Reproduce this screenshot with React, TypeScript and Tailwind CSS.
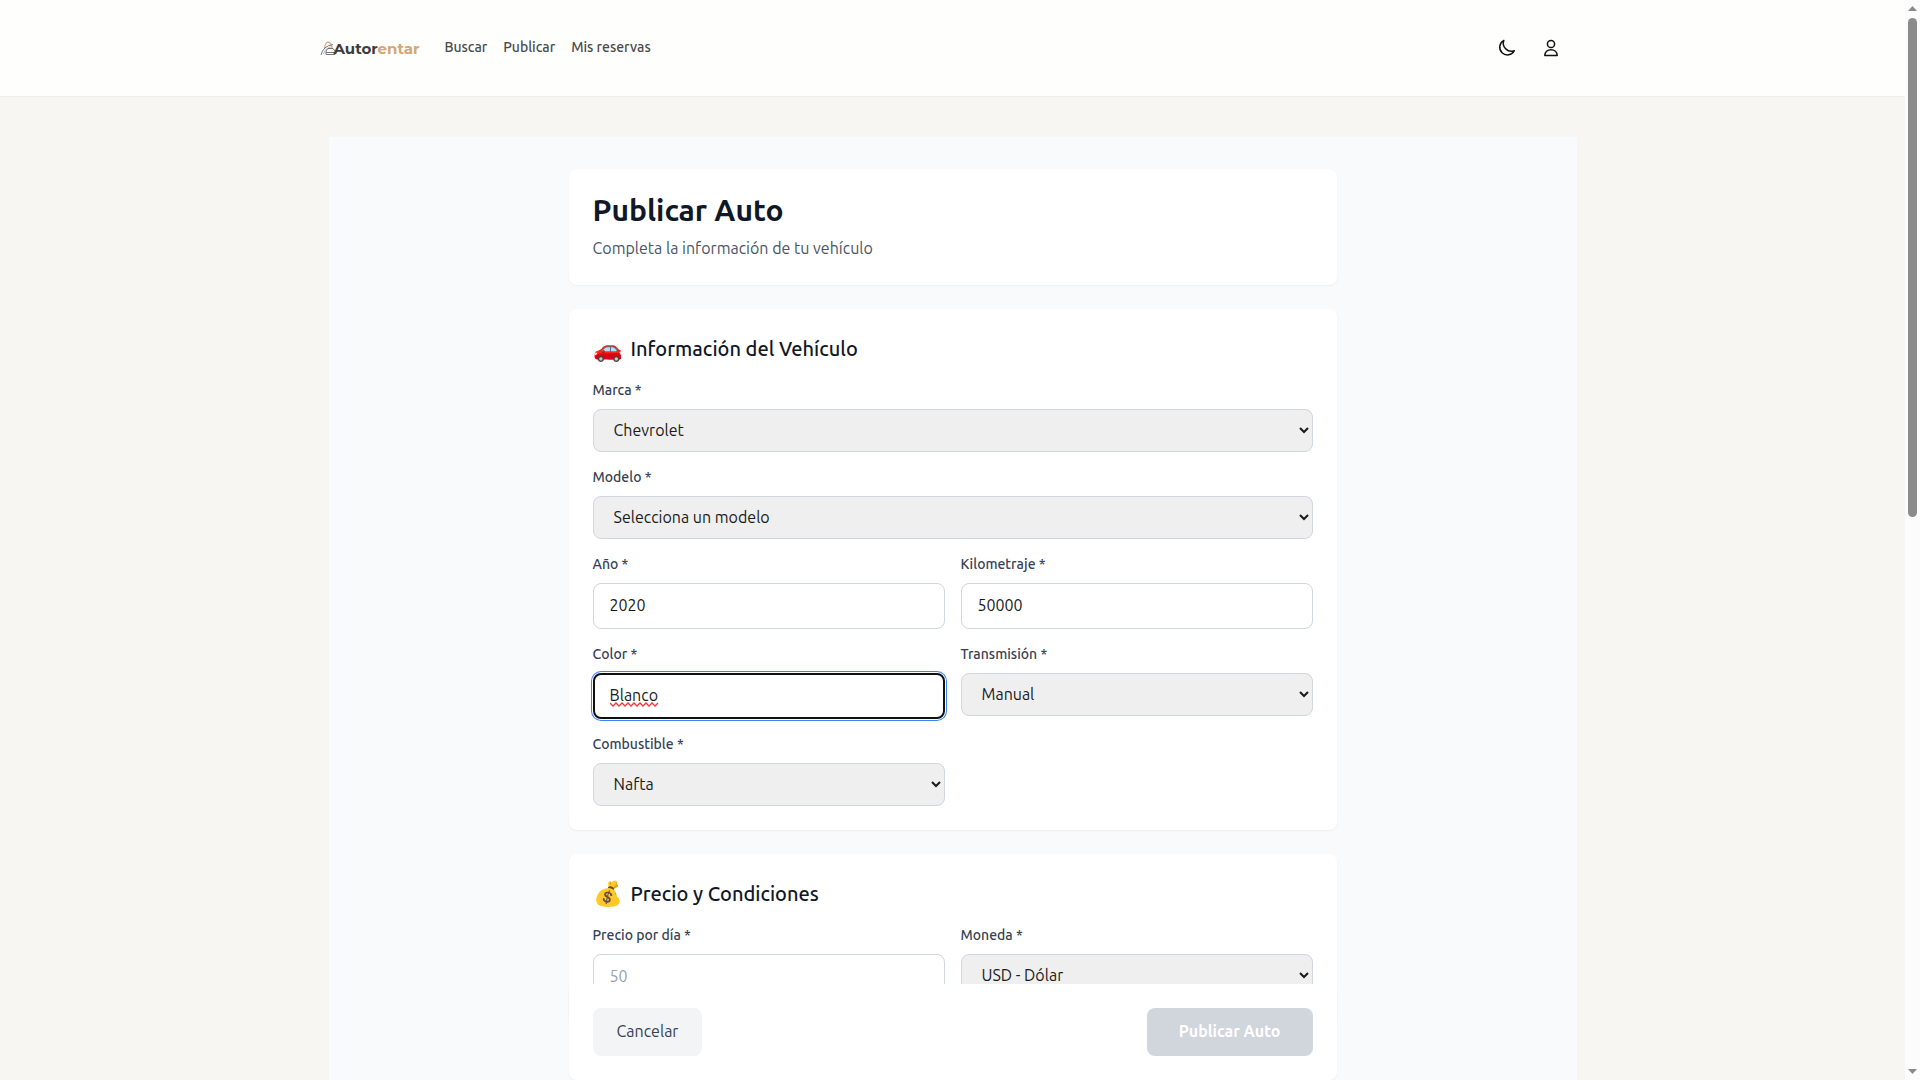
import React from "react";

const labelClass = "mb-2.5 block text-sm leading-[18px] font-medium text-gray-700";
const inputClass =
  "block h-[46px] w-full rounded-lg border border-gray-300 bg-white px-4 pb-0.5 text-[#1a1a1a] placeholder:text-gray-400 outline-none";
const focusedInputClass =
  "block h-[46px] w-full rounded-lg border-2 border-[#101010] bg-white px-[15px] pb-0.5 text-[#1a1a1a] shadow-[0_0_0_1px_#ffffff,0_0_0_2px_#3b82f6] outline-none";
const selectClass =
  "block h-[43px] w-full rounded-lg border border-gray-300 bg-[#efefef] px-4 pb-0.5 text-[#1a1a1a]";

function SelectField({ id, label, value }: { id: string; label: string; value: string }) {
  return (
    <div>
      <label htmlFor={id} className={labelClass}>
        {label}
      </label>
      <select id={id} defaultValue={value} className={selectClass}>
        <option>{value}</option>
      </select>
    </div>
  );
}

function InputField({
  id,
  label,
  value,
  placeholder,
  active = false,
}: {
  id: string;
  label: string;
  value?: string;
  placeholder?: string;
  active?: boolean;
}) {
  return (
    <div>
      <label htmlFor={id} className={labelClass}>
        {label}
      </label>
      <div className="relative">
        <input
          id={id}
          type="text"
          spellCheck={false}
          defaultValue={value}
          placeholder={placeholder}
          className={active ? focusedInputClass : inputClass}
        />
        {active && (
          <svg
            aria-hidden="true"
            width="49"
            height="5"
            viewBox="0 0 49 5"
            fill="none"
            stroke="#f5333a"
            strokeWidth="1.3"
            className="pointer-events-none absolute top-[29px] left-[17px]"
          >
            <path d="M0 1L3 4L6 1L9 4L12 1L15 4L18 1L21 4L24 1L27 4L30 1L33 4L36 1L39 4L42 1L45 4L48 1" />
          </svg>
        )}
      </div>
    </div>
  );
}

function SectionTitle({ icon, children }: { icon: string; children: React.ReactNode }) {
  return (
    <h2 className="mb-4 flex items-center text-xl font-medium text-gray-900">
      <span className="mr-2 text-2xl font-normal">{icon}</span>
      {children}
    </h2>
  );
}

function Logo() {
  return (
    <a href="#inicio" className="flex items-center pt-0.5" aria-label="Autorentar">
      <svg width="18" height="18" viewBox="0 0 18 18" fill="none" className="-mr-1">
        <path d="M4.5 9 Q5 2.5 8 2 Q11 2 12.5 9" stroke="#d9b48a" strokeWidth="1.3" />
        <path d="M1 15 Q3 6 13 4.5" stroke="#777" strokeWidth="1" />
        <path d="M3.5 14 Q5 8 12 6.5" stroke="#aaa" strokeWidth="0.8" />
        <path d="M6 11 L8 8.5 H13 L15 11 M6 11 V14.5 H15 L17 12 M6 12.5 H15" stroke="#666" strokeWidth="0.9" />
      </svg>
      <span className="font-['Montserrat','Inter',sans-serif] text-[15px] leading-6 font-bold text-[#3c3c3c]">
        Autor<span className="text-[#d2a774]">entar</span>
      </span>
    </a>
  );
}

function Header() {
  return (
    <header className="h-[97px] shrink-0 border-b border-[#efeeea] bg-[#fefefd]">
      <div className="mx-auto flex h-24 max-w-[1280px] items-center justify-between px-[7px]">
        <div className="flex items-center gap-[25px]">
          <Logo />
          <nav className="flex gap-4 pb-0.5 text-sm font-medium text-[#4a4a4a]">
            <a href="#buscar">Buscar</a>
            <a href="#publicar">Publicar</a>
            <a href="#reservas">Mis reservas</a>
          </nav>
        </div>
        <div className="flex items-center gap-1 pr-[15px] text-[#111]">
          <button type="button" aria-label="Modo oscuro" className="flex h-10 w-10 items-center justify-center">
            <svg width="20" height="20" viewBox="0 0 20 20" fill="none" stroke="currentColor" strokeWidth="1.5" strokeLinejoin="round">
              <path d="M6.8 2.4A7.7 7.7 0 1 0 17.3 12.7A8.1 8.1 0 0 1 6.8 2.4Z" />
            </svg>
          </button>
          <button type="button" aria-label="Perfil" className="flex h-10 w-10 items-center justify-center">
            <svg width="20" height="20" viewBox="0 0 20 20" fill="none" stroke="currentColor" strokeWidth="1.5" strokeLinejoin="round">
              <circle cx="10" cy="6" r="3.6" />
              <path d="M3.8 17.6C3.8 13.9 6.5 11.7 10 11.7S16.2 13.9 16.2 17.6Z" />
            </svg>
          </button>
        </div>
      </div>
    </header>
  );
}

function Scrollbar() {
  return (
    <div aria-hidden="true" className="flex w-[15px] shrink-0 flex-col items-center bg-[#fcfcfc] py-1.5">
      <svg width="9" height="5" viewBox="0 0 9 5" fill="#8b8b8b">
        <path d="M4.5 0 L9 5 H0 Z" />
      </svg>
      <div className="my-[7px] flex w-[9px] flex-1 flex-col">
        <div className="h-[47.8%] rounded-full bg-[#8b8b8b]" />
      </div>
      <svg width="9" height="5" viewBox="0 0 9 5" fill="#8b8b8b">
        <path d="M4.5 5 L9 0 H0 Z" />
      </svg>
    </div>
  );
}

export default function App() {
  return (
    <div className="flex h-screen bg-[#f7f6f3] font-['Ubuntu','Noto_Sans',sans-serif] text-base">
      <div className="min-w-0 flex-1 overflow-y-auto [scrollbar-width:none]">
        <Header />
        <main className="mx-auto max-w-[1280px] px-4 pt-10">
          <div className="bg-gray-50 px-4 py-8">
            <form className="mx-auto flex max-w-3xl flex-col gap-6">
              <div className="rounded-lg bg-white px-6 pt-[23px] pb-[25px] shadow-xs">
                <h1 className="mb-2 text-3xl font-bold text-gray-900">Publicar Auto</h1>
                <p className="text-gray-600">Completa la información de tu vehículo</p>
              </div>

              <section className="rounded-lg bg-white p-6 shadow-xs">
                <SectionTitle icon="🚗">Información del Vehículo</SectionTitle>
                <div className="flex flex-col gap-4">
                  <SelectField id="marca" label="Marca *" value="Chevrolet" />
                  <SelectField id="modelo" label="Modelo *" value="Selecciona un modelo" />
                  <div className="grid grid-cols-2 gap-4">
                    <InputField id="anio" label="Año *" value="2020" />
                    <InputField id="kilometraje" label="Kilometraje *" value="50000" />
                    <InputField id="color" label="Color *" value="Blanco" active />
                    <SelectField id="transmision" label="Transmisión *" value="Manual" />
                    <SelectField id="combustible" label="Combustible *" value="Nafta" />
                  </div>
                </div>
              </section>

              <section className="rounded-lg bg-white p-6 shadow-xs">
                <SectionTitle icon="💰">Precio y Condiciones</SectionTitle>
                <div className="grid grid-cols-2 gap-4">
                  <InputField id="precio" label="Precio por día *" placeholder="50" />
                  <SelectField id="moneda" label="Moneda *" value="USD - Dólar" />
                </div>
              </section>

              <div className="sticky bottom-0 z-10 flex justify-between rounded-lg bg-white p-6 shadow-xs">
                <button type="button" className="h-12 rounded-lg bg-gray-100 px-6 pb-0.5 text-gray-700">
                  Cancelar
                </button>
                <button type="submit" disabled className="h-12 rounded-lg bg-gray-300 px-8 pb-0.5 font-semibold text-white">
                  Publicar Auto
                </button>
              </div>
            </form>
          </div>
        </main>
      </div>
      <Scrollbar />
    </div>
  );
}
